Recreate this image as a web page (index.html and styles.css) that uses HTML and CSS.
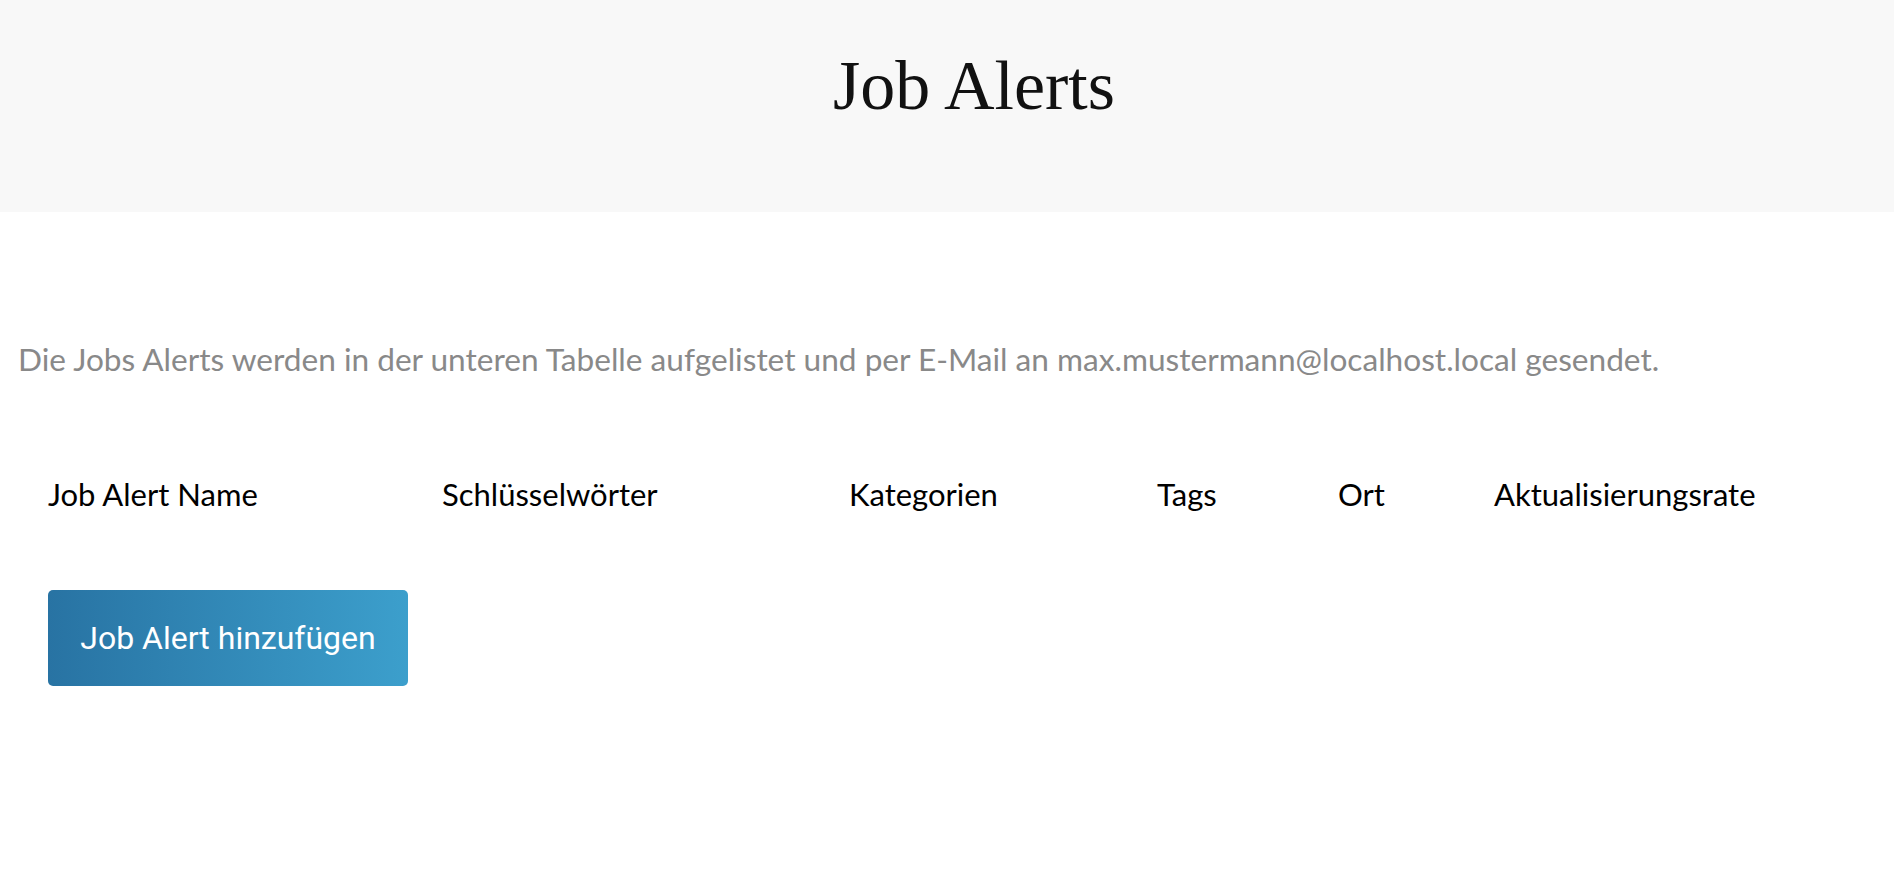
FILE: index.html
```html
<!DOCTYPE html>
<html>
<head>
    <meta charset="UTF-8">
    <meta name="viewport" content="width=device-width, initial-scale=1.0">
    <title>Job Alerts</title>
    <link rel="stylesheet" href="styles.css">
</head>
<body>
    <!-- Seitenkopf -->
    <header class="page-header">
        <h1 class="page-title">Job Alerts</h1>
    </header>

    <!-- Inhalt -->
    <div class="content">
        <p class="intro">Die Jobs Alerts werden in der unteren Tabelle aufgelistet und per E-Mail an max.mustermann@localhost.local gesendet.</p>

        <div class="alerts">
            <div class="alerts-head">
                <div class="col">Job Alert Name</div>
                <div class="col">Schlüsselwörter</div>
                <div class="col">Kategorien</div>
                <div class="col">Tags</div>
                <div class="col">Ort</div>
                <div class="col">Aktualisierungsrate</div>
            </div>
            <div class="alerts-actions">
                <button class="btn-add">Job Alert hinzufügen</button>
            </div>
        </div>
    </div>
</body>
</html>
```

FILE: styles.css
```css
body {
    margin: 0;
    background: #fff;
    font-family: "Lato", "Noto Sans", sans-serif;
}
.page-header {
    height: 212px;
    box-sizing: border-box;
    padding: 51px 0 0 54px;
    background-color: #f8f8f8;
    text-align: center;
}
.page-title {
    margin: 0;
    font-family: "Liberation Serif", serif;
    font-weight: normal;
    font-size: 70px;
    line-height: 70px;
    color: #111;
}
.content {
    padding: 0 18px;
}
.intro {
    margin: 0;
    padding-top: 125px;
    font-size: 31.6px;
    line-height: 44px;
    color: #898989;
}
.alerts {
    padding: 0 30px;
}
.alerts-head {
    display: grid;
    grid-template-columns: 394px 407px 308px 181px 156px 1fr;
    padding-top: 91px;
    font-size: 31px;
    line-height: 44px;
    color: #000;
}
.alerts-actions {
    padding-top: 74px;
}
.btn-add {
    width: 360px;
    height: 96px;
    padding: 0;
    border: none;
    border-radius: 5px;
    background: linear-gradient(to right, #2873a3, #3c9fcc);
    color: #fff;
    font-family: "Roboto", sans-serif;
    font-size: 32px;
    cursor: pointer;
}
```
